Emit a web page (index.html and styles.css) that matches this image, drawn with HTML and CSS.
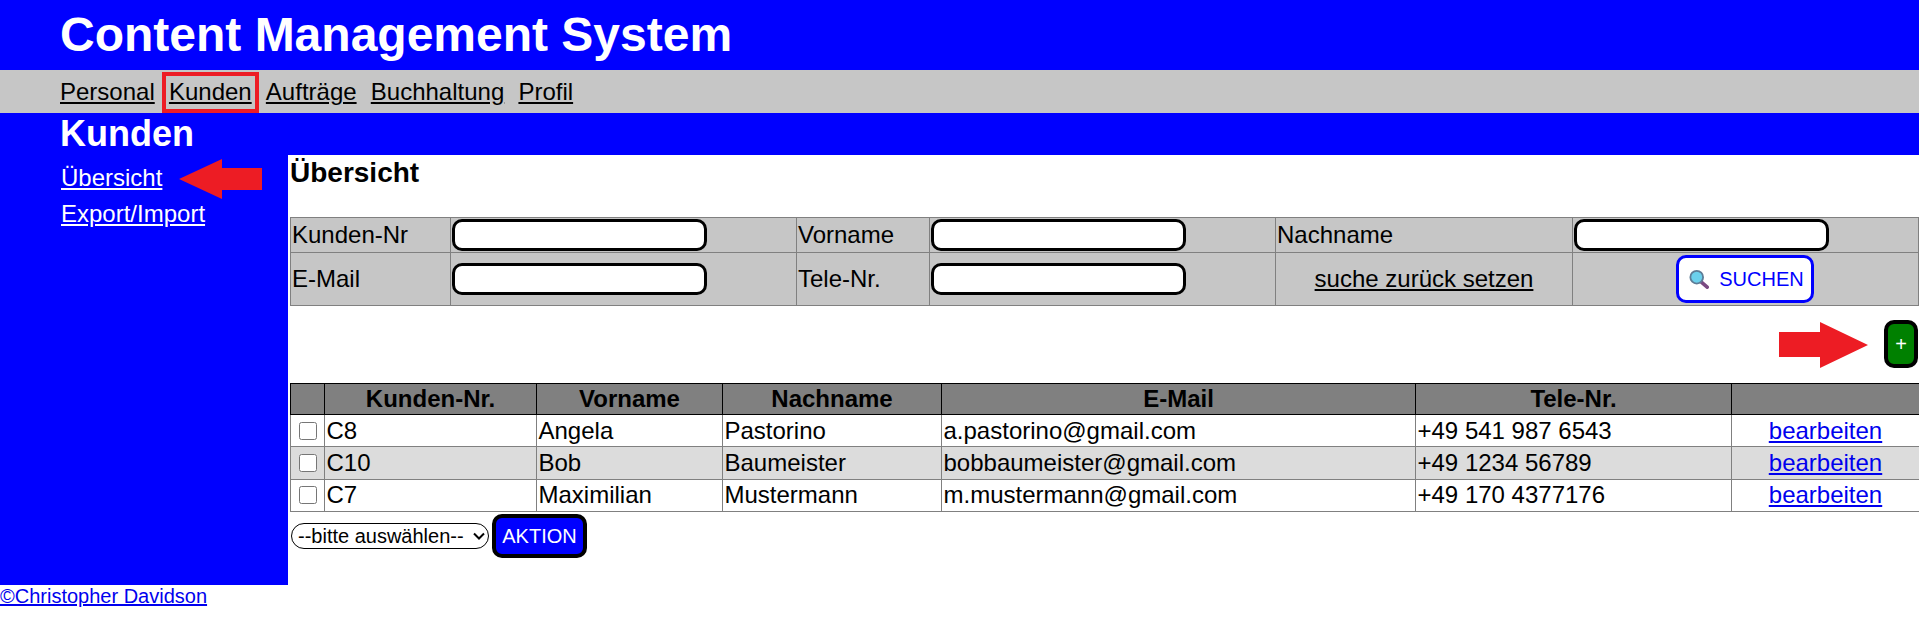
FILE: index.html
```html
<!DOCTYPE html>
<!-- Kunden overview page of the CMS -->
<html>

<head>
  <meta charset="utf8">
  <title>Content Management System</title>
  <link rel="stylesheet" href="styles.css">
</head>

<body>
  <header class="top">
    <h1>Content Management System</h1>
  </header>
  <nav class="mainnav">
    <a href="#">Personal</a>
    <a href="#" class="marked">Kunden</a>
    <a href="#">Aufträge</a>
    <a href="#">Buchhaltung</a>
    <a href="#">Profil</a>
  </nav>
  <div class="subhead">
    <h2>Kunden</h2>
  </div>
  <div class="wrap">
    <aside class="side">
      <a href="#">Übersicht</a>
      <a href="#">Export/Import</a>
      <svg class="arrow arrow-left" viewBox="0 0 83 40"><path d="M0 20 43 0V9H83V31H43V40Z" /></svg>
    </aside>
    <main class="content">
      <h3>Übersicht</h3>
      <table class="search">
        <colgroup>
          <col class="s1"><col class="s2"><col class="s3"><col class="s4"><col class="s5"><col class="s6">
        </colgroup>
        <tr>
          <td>Kunden-Nr</td>
          <td><input type="text"></td>
          <td>Vorname</td>
          <td><input type="text"></td>
          <td>Nachname</td>
          <td><input type="text"></td>
        </tr>
        <tr>
          <td>E-Mail</td>
          <td><input type="text"></td>
          <td>Tele-Nr.</td>
          <td><input type="text"></td>
          <td class="center"><a href="#" class="reset">suche zurück setzen</a></td>
          <td class="center">
            <button class="btn-search">
              <svg viewBox="0 0 22 20"><path d="M13 13 20 19" class="handle" /><circle cx="8.5" cy="8" r="7" class="glass" /></svg>
              SUCHEN
            </button>
          </td>
        </tr>
      </table>
      <div class="addrow">
        <svg class="arrow arrow-right" viewBox="0 0 89 46"><path d="M89 23 41 0V10H0V35H41V46Z" /></svg>
        <button class="btn-add">+</button>
      </div>
      <table class="list">
        <colgroup>
          <col class="c1"><col class="c2"><col class="c3"><col class="c4"><col class="c5"><col class="c6"><col class="c7">
        </colgroup>
        <thead>
          <tr>
            <th></th>
            <th>Kunden-Nr.</th>
            <th>Vorname</th>
            <th>Nachname</th>
            <th>E-Mail</th>
            <th>Tele-Nr.</th>
            <th></th>
          </tr>
        </thead>
        <tbody>
          <tr>
            <td class="center"><input type="checkbox"></td>
            <td>C8</td>
            <td>Angela</td>
            <td>Pastorino</td>
            <td>a.pastorino@gmail.com</td>
            <td>+49 541 987 6543</td>
            <td class="center"><a href="#">bearbeiten</a></td>
          </tr>
          <tr>
            <td class="center"><input type="checkbox"></td>
            <td>C10</td>
            <td>Bob</td>
            <td>Baumeister</td>
            <td>bobbaumeister@gmail.com</td>
            <td>+49 1234 56789</td>
            <td class="center"><a href="#">bearbeiten</a></td>
          </tr>
          <tr>
            <td class="center"><input type="checkbox"></td>
            <td>C7</td>
            <td>Maximilian</td>
            <td>Mustermann</td>
            <td>m.mustermann@gmail.com</td>
            <td>+49 170 4377176</td>
            <td class="center"><a href="#">bearbeiten</a></td>
          </tr>
        </tbody>
      </table>
      <div class="actions">
        <div class="picker">
          <select>
            <option>--bitte auswählen--</option>
          </select>
          <svg class="chevron" viewBox="0 0 12 8"><path d="M1 1.5 6 6.5 11 1.5" /></svg>
        </div>
        <button class="btn-action">AKTION</button>
      </div>
    </main>
  </div>
  <footer class="foot"><a href="#">©Christopher Davidson</a></footer>
</body>

</html>
```

FILE: styles.css
```css
body {
  margin: 0;
  font: 24px "Liberation Sans", Arial, sans-serif;
  color: #000;
  background: #FFF;
}

h1,
h2,
h3 {
  margin: 0;
}

.top {
  height: 70px;
  padding-left: 60px;
  background: #00F;
  color: #FFF;
}

h1 {
  font-size: 48px;
  line-height: 70px;
}

.mainnav {
  display: flex;
  gap: 14.2px;
  height: 43px;
  padding-left: 60px;
  background: #C6C6C6;
  line-height: 43px;
}

.mainnav a {
  position: relative;
  color: #000;
}

.marked::after {
  content: "";
  position: absolute;
  left: -7px;
  right: -7px;
  top: 2px;
  bottom: 0;
  border: 4px solid #ED1C24;
}

.subhead {
  height: 42px;
  padding-left: 60px;
  background: #00F;
  color: #FFF;
}

h2 {
  font-size: 36px;
  line-height: 42px;
}

.wrap {
  display: flex;
}

.side {
  position: relative;
  display: flex;
  flex-direction: column;
  gap: 8px;
  box-sizing: border-box;
  flex: none;
  width: 288px;
  height: 430px;
  padding: 9px 0 0 61px;
  background: #00F;
}

.side a {
  color: #FFF;
  line-height: 28px;
}

.arrow {
  position: absolute;
  fill: #ED1C24;
}

.arrow-left {
  left: 179px;
  top: 4px;
  width: 83px;
  height: 40px;
}

.content {
  flex: 1;
  min-width: 0;
  padding-left: 2px;
}

h3 {
  height: 62px;
  font-size: 28px;
  line-height: 36px;
}

table {
  table-layout: fixed;
  width: 1629px;
  border-collapse: collapse;
}

.search {
  background: #C6C6C6;
}

.search td {
  padding: 0 1px;
  border: 1px solid #808080;
}

.search tr:first-child {
  height: 35px;
}

.search tr:last-child {
  height: 53px;
}

.center {
  text-align: center;
}

.s1 { width: 160px; }
.s2 { width: 346px; }
.s3 { width: 133px; }
.s4 { width: 346px; }
.s5 { width: 297px; }
.s6 { width: 346px; }

input[type="text"] {
  display: block;
  box-sizing: border-box;
  width: 255px;
  height: 32px;
  margin: 0;
  border: 3px solid #000;
  border-radius: 10px;
  background: #FFF;
}

.reset {
  color: #000;
}

button {
  box-sizing: border-box;
  font: 20px "Liberation Sans", Arial, sans-serif;
  cursor: pointer;
}

.btn-search {
  display: inline-flex;
  align-items: center;
  gap: 10px;
  justify-content: center;
  width: 138px;
  height: 48px;
  margin-right: 2px;
  padding: 0 0 0 4px;
  border: 3px solid #00F;
  border-radius: 10px;
  background: #FFF;
  color: #00F;
  vertical-align: middle;
}

.btn-search svg {
  width: 20px;
  height: 20px;
}

.glass {
  fill: #6BD0EC;
  stroke: #5E7C96;
  stroke-width: 2;
}

.handle {
  fill: none;
  stroke: #7A4A82;
  stroke-width: 4;
  stroke-linecap: round;
}

.addrow {
  position: relative;
  display: flex;
  justify-content: flex-end;
  box-sizing: border-box;
  width: 1629px;
  height: 77px;
  padding: 14px 1px 0 0;
}

.btn-add {
  width: 34px;
  height: 48px;
  padding: 0;
  border: 4px solid #000;
  border-radius: 10px;
  background: #008000;
  color: #FFF;
}

.arrow-right {
  left: 1489px;
  top: 16px;
  width: 89px;
  height: 46px;
}

.c1 { width: 34px; }
.c2 { width: 212px; }
.c3 { width: 186px; }
.c4 { width: 219px; }
.c5 { width: 474px; }
.c6 { width: 316px; }
.c7 { width: 188px; }

.list th {
  height: 30px;
  padding: 0;
  border: 1px solid #000;
  background: #808080;
}

.list td {
  height: 31.4px;
  padding: 0 1.5px;
  border: 1px solid #808080;
}

.list tbody tr:nth-child(2) {
  background: #DCDCDC;
}

input[type="checkbox"] {
  display: block;
  width: 18px;
  height: 18px;
  margin: 0 auto;
}

.actions {
  display: flex;
  align-items: center;
  gap: 3px;
  padding: 2px 0 0 1px;
}

.picker {
  position: relative;
  display: flex;
}

select {
  appearance: none;
  box-sizing: border-box;
  width: 198px;
  height: 26px;
  padding: 0 0 0 6px;
  border: 1px solid #000;
  border-radius: 13px;
  background: #FFF;
  font: 20px "Liberation Sans", Arial, sans-serif;
}

.chevron {
  position: absolute;
  right: 4px;
  top: 9px;
  width: 12px;
  height: 8px;
  fill: none;
  stroke: #000;
  stroke-width: 2;
}

.btn-action {
  width: 95px;
  height: 44px;
  padding: 0;
  border: 4px solid #000;
  border-radius: 10px;
  background: #00F;
  color: #FFF;
}

.foot {
  font-size: 20px;
  line-height: 23px;
}
```
